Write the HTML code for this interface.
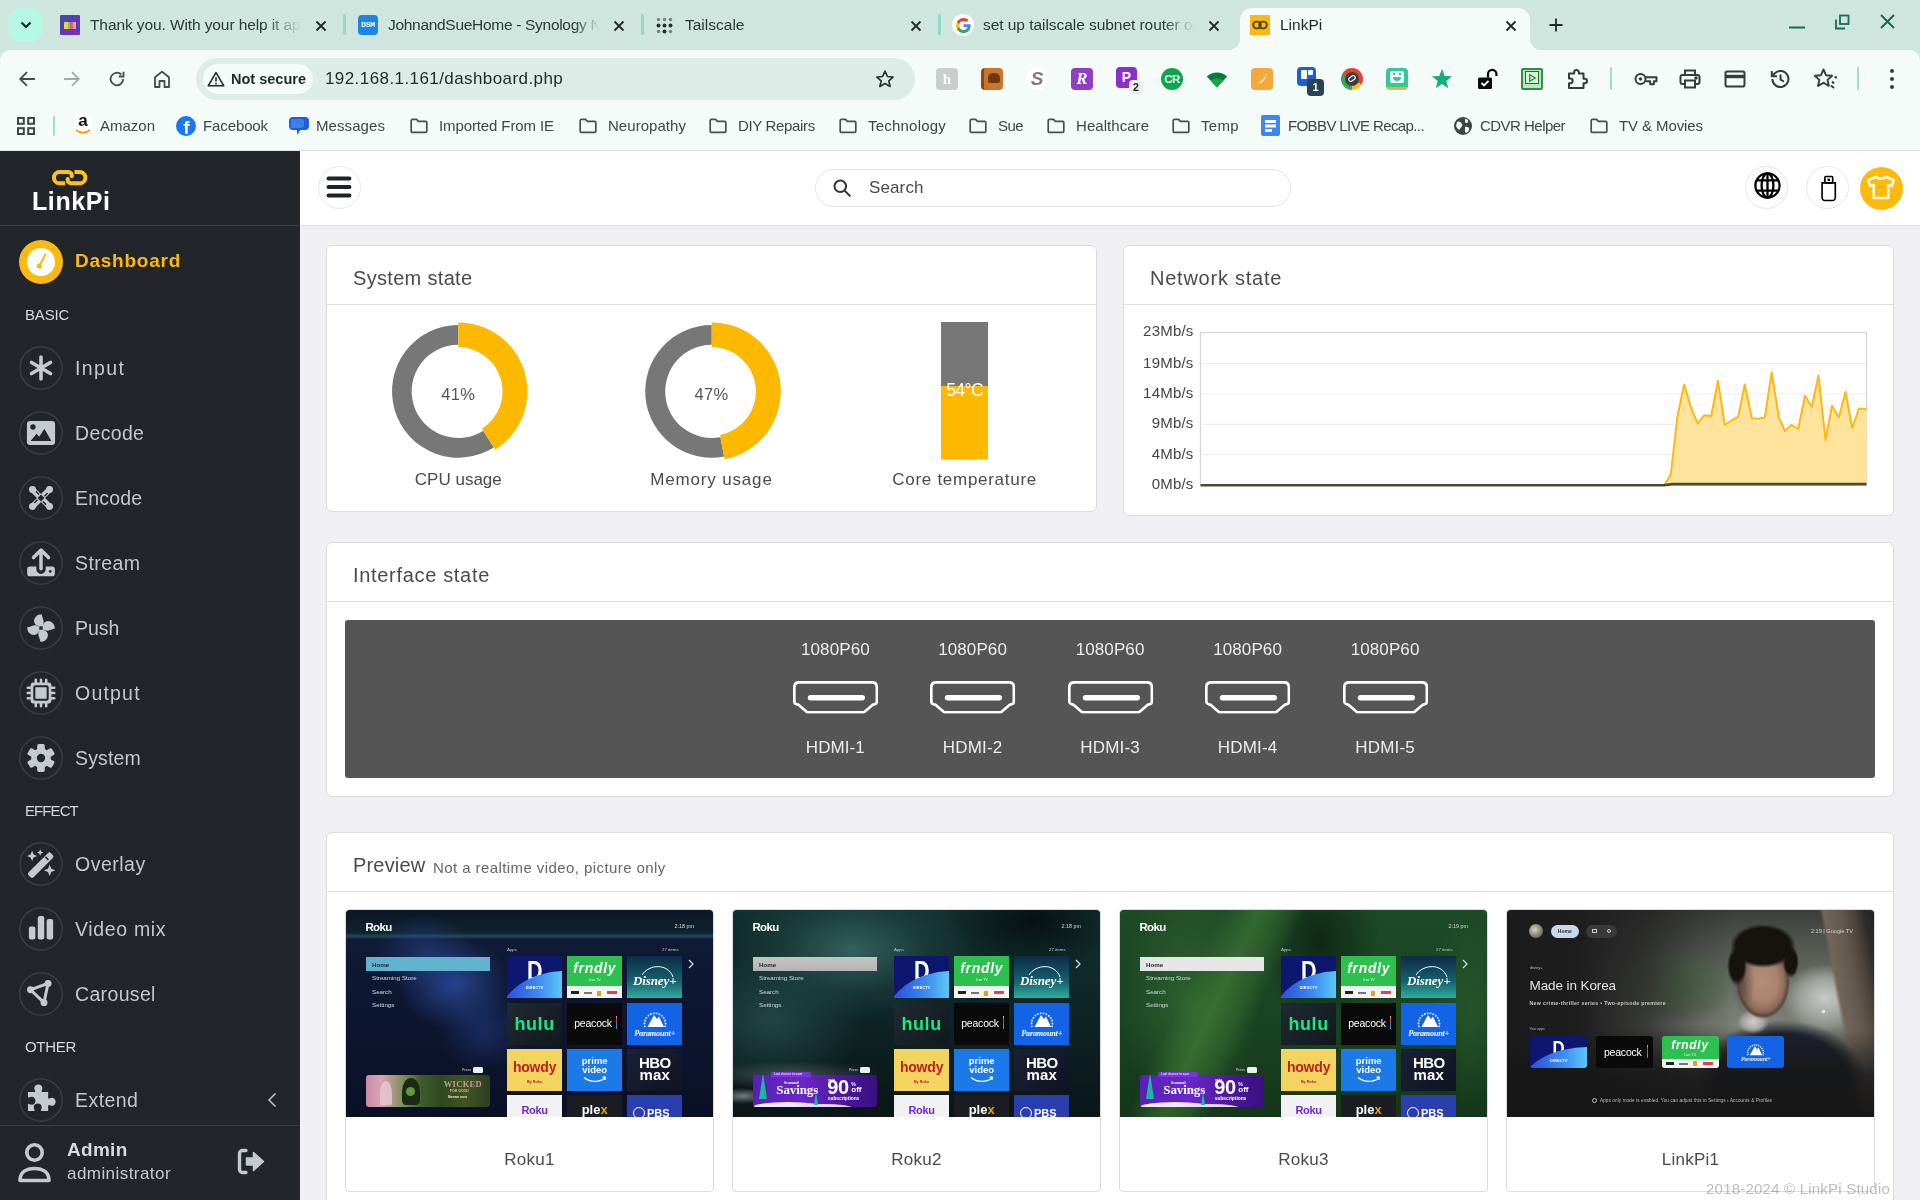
<!DOCTYPE html>
<html lang="en">
<head>
<meta charset="utf-8">
<title>LinkPi</title>
<style>
*{box-sizing:border-box;margin:0;padding:0}
html,body{width:1920px;height:1200px;overflow:hidden;background:#efeff4;will-change:transform;font-family:"Liberation Sans",sans-serif;color:#444}
.abs{position:absolute}
svg{display:block;overflow:visible}
/* ---------- browser chrome ---------- */
#chrome{position:absolute;left:0;top:0;width:1920px;height:151px;background:#f4fbf8;overflow:hidden;border-bottom:1px solid #dfe6e3}
#tabstrip{position:absolute;left:0;top:0;width:1920px;height:64px;background:#cee6de}
#chrome .ttxt{position:absolute;top:15px;font-size:15.5px;color:#2a3a36;white-space:nowrap;overflow:hidden;height:20px;line-height:20px}
#chrome .tx{position:absolute;top:18.5px;width:14px;height:14px}
#chrome .tsep{position:absolute;top:14px;width:3px;height:21px;background:#92d9c5;border-radius:1.5px}
#acttab{position:absolute;left:1240px;top:8px;width:290px;height:42px;background:#f4fbf8;border-radius:12px 12px 0 0}
#acttab:before,#acttab:after{content:"";position:absolute;bottom:0;width:12px;height:12px;background:radial-gradient(circle at 0 0,rgba(244,251,248,0) 12px,#f4fbf8 12.5px)}
#acttab:before{left:-12px}
#acttab:after{right:-12px;background:radial-gradient(circle at 100% 0,rgba(244,251,248,0) 12px,#f4fbf8 12.5px)}
#toolbar{position:absolute;left:0;top:50px;width:1920px;height:101px;background:#f4fbf8;border-radius:10px 10px 0 0}
#omni{position:absolute;left:196px;top:58px;width:719px;height:42px;border-radius:21px;background:#dcede7}
#chip{position:absolute;left:203px;top:64px;width:110px;height:30px;border-radius:15px;background:#f4fbf8}
.bm{position:absolute;top:116px;font-size:15px;color:#3c4743;white-space:nowrap;line-height:20px;height:20px}
.ext{position:absolute;top:68px;width:22px;height:22px;border-radius:4px}
/* ---------- sidebar ---------- */
#side{position:absolute;left:0;top:151px;width:300px;height:1049px;background:#22252a}
#side .sep{position:absolute;left:0;width:300px;height:1px;background:#3b3e44}
.mi{position:absolute;left:19px;width:44px;height:44px;border-radius:50%;box-shadow:inset 0 0 0 1.6px #393d44}
.mi svg{position:absolute;left:7px;top:7px;width:30px;height:30px}
.ml{position:absolute;left:75px;font-size:19.5px;line-height:24px;color:#c3c8cf;letter-spacing:.9px;white-space:nowrap}
.mh{position:absolute;left:25px;font-size:15px;line-height:18px;color:#d5d8dc;letter-spacing:.5px}
/* ---------- top bar ---------- */
#top{position:absolute;left:300px;top:151px;width:1620px;height:75px;background:#fff;border-bottom:1px solid #e3e3e8}
.cbtn{position:absolute;width:43px;height:43px;border-radius:50%;border:1px solid #e6e6e6;background:#fff}
#search{position:absolute;left:515px;top:18px;width:476px;height:38px;border:1px solid #e3e3e3;border-radius:19px}
/* ---------- cards ---------- */
.card{position:absolute;background:#fff;border:1px solid #dcdce0;border-radius:6px}
.card .hd{position:absolute;left:0;top:0;right:0;height:59px;border-bottom:1px solid #dcdce0}
.card .hd span.t{position:absolute;left:26px;top:20px;font-size:20px;line-height:24px;color:#4a4a4a;white-space:nowrap;letter-spacing:.35px}
.lbl{position:absolute;font-size:18px;line-height:22px;color:#4a4a4a;white-space:nowrap;text-align:center;letter-spacing:.3px}

.pc{position:absolute;width:369px;height:283px;border:1px solid #dcdce0;border-radius:4px;background:#fff;overflow:hidden}
.scr{position:absolute;left:0;top:0;width:367px;height:207px;overflow:hidden;background-color:#111;border-radius:3px 3px 0 0}
.pn{position:absolute;left:0;top:239px;width:367px;text-align:center;font-size:17px;line-height:22px;color:#4a4a4a;letter-spacing:.25px}
.tl{position:absolute;overflow:hidden}
.tt{position:absolute;white-space:nowrap;display:block}
i.abs{display:block}
i.sw{display:block;position:absolute;left:-14%;top:36%;width:240%;height:230%;border-radius:50%;background:linear-gradient(90deg,#4a3ed0 0%,#2f63e0 14%,#3b8cf0 30%,#5cc6f6 47%)}
</style>
</head>
<body>
<!-- BROWSER CHROME -->
<div id="chrome">
<div id="tabstrip"></div>
<div id="toolbar"></div>
<div id="acttab"></div>
<svg width="0" height="0" style="position:absolute">
<defs>
<symbol id="fold" viewBox="0 0 20 20"><path d="M2.2 4.6c0-.7.5-1.2 1.2-1.2h4.2l1.8 1.9h7.2c.7 0 1.2.5 1.2 1.2v8.7c0 .7-.5 1.2-1.2 1.2H3.4c-.700 0-1.2-.500-1.2-1.2z" fill="none" stroke="#474f4c" stroke-width="1.7" stroke-linejoin="round"/></symbol>
<symbol id="xx" viewBox="0 0 14 14"><path d="M2.5 2.5l9 9M11.5 2.5l-9 9" stroke="#1f2925" stroke-width="1.8" fill="none"/></symbol>
</defs>
</svg>
<!-- tab search button -->
<div class="abs" style="left:9px;top:8px;width:33px;height:34px;border-radius:11px;background:#b4f8e6"></div>
<svg class="abs" style="left:18px;top:19px" width="16" height="12" viewBox="0 0 16 12"><path d="M3.5 3.5l4.5 4.5 4.5-4.5" stroke="#10201b" stroke-width="2" fill="none"/></svg>
<!-- tab 1 -->
<div class="abs" style="left:60px;top:15px;width:20px;height:20px;background:linear-gradient(135deg,#3a4aa8,#7b2fb5);border-radius:1px"></div>
<div class="abs" style="left:64px;top:21.5px;width:12px;height:7px;background:linear-gradient(90deg,#f2d24a 0 30%,#7cc86a 30% 52%,#e8605a 52% 76%,#c9a0e8 76%)"></div>
<div class="ttxt" style="left:90px;width:212px;-webkit-mask-image:linear-gradient(90deg,#000 82%,transparent);letter-spacing:-.1px">Thank you. With your help it appears</div>
<svg class="tx" style="left:314px"><use href="#xx"/></svg>
<div class="tsep" style="left:343px"></div>
<!-- tab 2 -->
<div class="abs" style="left:358px;top:15px;width:20px;height:20px;background:#1b86e8;border-radius:4px"></div>
<div class="abs" style="left:358px;top:20px;width:20px;height:10px;font:bold 8px/10px 'Liberation Mono',monospace;color:#fff;text-align:center;letter-spacing:-.3px">DSM</div>
<div class="ttxt" style="left:388px;width:212px;-webkit-mask-image:linear-gradient(90deg,#000 88%,transparent);letter-spacing:-.3px">JohnandSueHome - Synology NAS</div>
<svg class="tx" style="left:612px"><use href="#xx"/></svg>
<div class="tsep" style="left:641px"></div>
<!-- tab 3 -->
<svg class="abs" style="left:656px;top:17px" width="17" height="17" viewBox="0 0 17 17" fill="#25302c"><circle cx="2.5" cy="2.5" r="1.7" opacity=".55"/><circle cx="8.5" cy="2.5" r="1.7" opacity=".55"/><circle cx="14.5" cy="2.5" r="1.7" opacity=".55"/><circle cx="2.5" cy="8.5" r="2"/><circle cx="8.5" cy="8.5" r="2"/><circle cx="14.5" cy="8.5" r="2"/><circle cx="2.5" cy="14.5" r="1.7" opacity=".55"/><circle cx="8.5" cy="14.5" r="2"/><circle cx="14.5" cy="14.5" r="1.7" opacity=".55"/></svg>
<div class="ttxt" style="left:685px;width:200px">Tailscale</div>
<svg class="tx" style="left:909px"><use href="#xx"/></svg>
<div class="tsep" style="left:938px"></div>
<!-- tab 4 -->
<div class="abs" style="left:952px;top:14px;width:22px;height:22px;border-radius:50%;background:#fff"></div><svg class="abs" style="left:955.5px;top:17.5px" width="15" height="15" viewBox="0 0 18 18"><path d="M17.6 9.2c0-.600-.100-1.2-.200-1.8H9v3.5h4.8c-.200 1.1-.800 2-1.8 2.7v2.2h2.9c1.7-1.6 2.7-3.9 2.7-6.6z" fill="#4285f4"/><path d="M9 18c2.4 0 4.5-.800 5.9-2.2L12 13.6c-.800.5-1.8.9-3 .9-2.3 0-4.3-1.6-5-3.7H1v2.3C2.5 16 5.5 18 9 18z" fill="#34a853"/><path d="M4 10.8c-.200-.500-.300-1.1-.300-1.8s.100-1.2.3-1.8V4.9H1C.4 6.2 0 7.5 0 9s.400 2.8 1 4.1z" fill="#fbbc05"/><path d="M9 3.6c1.3 0 2.5.4 3.4 1.3L15 2.3C13.5.9 11.4 0 9 0 5.5 0 2.5 2 1 4.9l3 2.3c.7-2.1 2.7-3.6 5-3.6z" fill="#ea4335"/></svg>
<div class="ttxt" style="left:983px;width:212px;-webkit-mask-image:linear-gradient(90deg,#000 85%,transparent);letter-spacing:-.05px">set up tailscale subnet router on</div>
<svg class="tx" style="left:1207px"><use href="#xx"/></svg>
<!-- active tab -->
<div class="abs" style="left:1250px;top:15px;width:20px;height:20px;background:#fdb913"></div>
<svg class="abs" style="left:1252px;top:20px" width="16" height="10" viewBox="0 0 16 10"><rect x="1.2" y="1.7" width="7.6" height="6.6" rx="3.3" fill="none" stroke="#4d4214" stroke-width="1.8"/><rect x="7.2" y="1.7" width="7.6" height="6.6" rx="3.3" fill="none" stroke="#4d4214" stroke-width="1.8"/></svg>
<div class="ttxt" style="left:1280px;width:200px;color:#1c2522">LinkPi</div>
<svg class="tx" style="left:1504px"><use href="#xx"/></svg>
<svg class="abs" style="left:1548px;top:17px" width="16" height="16" viewBox="0 0 16 16"><path d="M8 1.5v13M1.5 8h13" stroke="#1c2925" stroke-width="1.8" fill="none"/></svg>
<!-- window controls -->
<svg class="abs" style="left:1789px;top:26px" width="16" height="3" viewBox="0 0 16 3"><path d="M0 1.5h16" stroke="#156b52" stroke-width="2"/></svg>
<svg class="abs" style="left:1834px;top:14px" width="16" height="16" viewBox="0 0 16 16" fill="none" stroke="#156b52" stroke-width="1.8"><rect x="6" y="1.5" width="8.5" height="8.5"/><path d="M2 5.5v9h9"/></svg>
<svg class="abs" style="left:1880px;top:14px" width="15" height="15" viewBox="0 0 15 15"><path d="M1 1l13 13M14 1L1 14" stroke="#156b52" stroke-width="2" fill="none"/></svg>
<!-- nav buttons -->
<svg class="abs" style="left:18px;top:70px" width="18" height="18" viewBox="0 0 18 18" fill="none" stroke="#434c48" stroke-width="1.8"><path d="M17 9H2.5M9 2.2L2.2 9 9 15.8"/></svg>
<svg class="abs" style="left:63px;top:70px" width="18" height="18" viewBox="0 0 18 18" fill="none" stroke="#a3aca9" stroke-width="1.8"><path d="M1 9h14.5M9 2.2L15.8 9 9 15.8"/></svg>
<svg class="abs" style="left:108px;top:70px" width="18" height="18" viewBox="0 0 18 18" fill="none" stroke="#434c48" stroke-width="1.8"><path d="M15.2 9a6.3 6.3 0 1 1-1.9-4.5"/><path d="M15.5 1.8v4.7h-4.7" stroke-linejoin="miter"/></svg>
<svg class="abs" style="left:153px;top:69px" width="18" height="20" viewBox="0 0 18 20" fill="none" stroke="#434c48" stroke-width="1.8"><path d="M2 18V8.2L9 2.6l7 5.6V18h-4.5v-6h-5v6z" stroke-linejoin="round"/></svg>
<!-- omnibox -->
<div id="omni"></div><div id="chip"></div>
<svg class="abs" style="left:207px;top:71px" width="18" height="16" viewBox="0 0 18 16" fill="none" stroke="#1f2926" stroke-width="1.6"><path d="M9 1.6L16.8 14.8H1.2z" stroke-linejoin="round"/><path d="M9 6.2v4.3M9 11.8v1.6"/></svg>
<div class="abs" style="left:231px;top:69px;font-size:14.5px;font-weight:bold;line-height:20px;color:#1f2926;white-space:nowrap">Not secure</div>
<div class="abs" style="left:325px;top:68px;font-size:17px;line-height:22px;color:#1f2926;white-space:nowrap;letter-spacing:.42px">192.168.1.161/dashboard.php</div>
<svg class="abs" style="left:875px;top:69px" width="20" height="20" viewBox="0 0 20 20" fill="none" stroke="#2a3632" stroke-width="1.7"><path d="M10 2.2l2.4 5.3 5.7.6-4.3 3.8 1.3 5.6L10 14.6l-5.1 2.9 1.3-5.6L1.9 8.1l5.7-.600z" stroke-linejoin="round"/></svg>
<!-- extension icons -->
<div class="ext" style="left:936px;background:#c9cdcb"></div><div class="abs" style="left:936px;top:68px;width:22px;height:22px;font:bold 15px/22px 'Liberation Serif',serif;color:#fff;text-align:center">ħ</div>
<div class="ext" style="left:981px;background:#c9762a;border-left:3px solid #8a4a14"></div><div class="abs" style="left:988px;top:73px;width:12px;height:10px;background:#6b3a10;border-radius:5px 5px 2px 2px"></div>
<div class="ext" style="left:1026px;background:#fff;border-radius:11px"></div><div class="abs" style="left:1026px;top:68px;width:22px;height:22px;font:italic bold 19px/22px 'Liberation Sans',sans-serif;color:#7d7d7d;text-align:center">S</div>
<div class="ext" style="left:1071px;background:#8e3fc4"></div><div class="abs" style="left:1071px;top:68px;width:22px;height:22px;font:italic bold 17px/22px 'Liberation Serif',serif;color:#fff;text-align:center">R</div>
<div class="ext" style="left:1116px;background:#8b2fc9;width:21px;height:21px;top:67px"></div><div class="abs" style="left:1116px;top:67px;width:21px;height:21px;font:bold 14px/21px 'Liberation Sans',sans-serif;color:#fff;text-align:center">P</div>
<div class="abs" style="left:1129px;top:80px;width:14px;height:14px;border-radius:4px;background:#e9efec;font:bold 10.5px/14px 'Liberation Sans',sans-serif;color:#222;text-align:center">2</div>
<div class="ext" style="left:1161px;background:#0aa54f;border-radius:11px"></div><div class="abs" style="left:1161px;top:68px;width:22px;height:22px;font:bold 11.5px/22px 'Liberation Sans',sans-serif;color:#fff;text-align:center;letter-spacing:-.5px">CR</div>
<svg class="abs" style="left:1206px;top:71px" width="22" height="17" viewBox="0 0 22 17"><path d="M11 16.5L.800 5.5C6.5.3 15.5.3 21.2 5.5z" fill="#0b7a3a"/><path d="M11 16.5L4.8 9.8c3.6-3.2 8.8-3.2 12.4 0z" fill="#19a34f"/></svg>
<div class="ext" style="left:1251px;background:#f6a83a"></div><svg class="abs" style="left:1254px;top:71px" width="16" height="16" viewBox="0 0 16 16"><path d="M2 14C6 12 10 8 13 2c-1 6-5 10-9 11z" fill="#fff"/></svg>
<div class="abs" style="left:1297px;top:67px;width:19px;height:19px;border-radius:4px;background:#1d5fd0"></div><div class="abs" style="left:1301px;top:70px;width:6px;height:9px;background:#fff;border-radius:1px"></div><div class="abs" style="left:1308px;top:70px;width:5px;height:5px;background:#fff;border-radius:1px"></div>
<div class="abs" style="left:1307px;top:79px;width:17px;height:17px;border-radius:4px;background:#2a4354;font:bold 11px/17px 'Liberation Sans',sans-serif;color:#fff;text-align:center">1</div>
<div class="abs" style="left:1341px;top:68px;width:22px;height:22px;border-radius:50%;background:conic-gradient(#e74234 0 33%,#f7bd1a 33% 50%,#3aa757 50% 83%,#e74234 83%)"></div><div class="abs" style="left:1345px;top:72px;width:14px;height:14px;border-radius:50%;background:#3b3f42"></div><div class="abs" style="left:1348px;top:76px;width:8px;height:5px;border:1.5px solid #fff;border-radius:3px;transform:rotate(-35deg)"></div>
<div class="ext" style="left:1386px;background:#2fc99a;border-bottom:3px solid #e8b23a"></div><div class="abs" style="left:1390px;top:71px;width:14px;height:12px;background:#f2fbf7;border-radius:2px"></div><div class="abs" style="left:1393px;top:77px;width:8px;height:4px;background:#2fc99a;border-radius:0 0 4px 4px"></div><div class="abs" style="left:1393px;top:73px;width:2px;height:2px;background:#2fc99a"></div><div class="abs" style="left:1399px;top:73px;width:2px;height:2px;background:#2fc99a"></div>
<svg class="abs" style="left:1431px;top:68px" width="22" height="21" viewBox="0 0 22 21"><path d="M11 .800l2.7 7.1 7.5.3-5.9 4.7 2 7.3L11 16l-6.3 4.2 2-7.3L.800 8.2l7.5-.300z" fill="#12b17a"/></svg>
<svg class="abs" style="left:1477px;top:67px" width="22" height="24" viewBox="0 0 22 24"><rect x="1" y="10.5" width="14" height="11.5" rx="1.5" fill="#0a0a0a"/><path d="M11 10.5V7a4.2 4.2 0 0 1 8.4 0v2" fill="none" stroke="#0a0a0a" stroke-width="2.2"/><path d="M4.5 16l2.5 2.5 4.5-4.5" stroke="#fff" stroke-width="1.8" fill="none"/></svg>
<div class="abs" style="left:1521px;top:68px;width:22px;height:22px;border:2px solid #2f8f46;background:#b9e7bf;border-radius:2px"></div><div class="abs" style="left:1525px;top:71px;width:14px;height:13px;border:1.5px solid #1f6a33;background:#d8f3da"></div><svg class="abs" style="left:1529px;top:74px" width="7" height="8" viewBox="0 0 7 8"><path d="M.800.8l5.5 3.2L.800 7.2z" fill="none" stroke="#1f8a3b" stroke-width="1.3"/></svg>
<svg class="abs" style="left:1566px;top:67px" width="22" height="23" viewBox="0 0 22 23" fill="none" stroke="#333d39" stroke-width="2"><path d="M3 6.5h5.2V5.3a2.3 2.3 0 0 1 4.6 0v1.2H17.5v5.2h1.2a2.3 2.3 0 0 1 0 4.6h-1.2V21H3v-4.8h1.3a2.3 2.3 0 0 0 0-4.6H3z" stroke-linejoin="round"/></svg>
<div class="abs" style="left:1610px;top:67px;width:2px;height:23px;background:#9be2cc;border-radius:1px"></div>
<svg class="abs" style="left:1634px;top:70px" width="24" height="18" viewBox="0 0 24 18" fill="none" stroke="#333d39" stroke-width="2"><circle cx="6.5" cy="9" r="5"/><circle cx="6.5" cy="9" r="1.3" fill="#333d39" stroke-width="1"/><path d="M11.5 7.2H22.5v4h-2.6v3h-3.7v-3h-4.7" stroke-linejoin="round"/></svg>
<svg class="abs" style="left:1679px;top:68px" width="22" height="22" viewBox="0 0 22 22" fill="none" stroke="#333d39" stroke-width="2"><path d="M6 7V2.5h10V7"/><rect x="1.5" y="7" width="19" height="9" rx="2"/><rect x="6" y="12.5" width="10" height="7" fill="#f4fbf8"/><circle cx="17" cy="10" r=".800" fill="#333d39"/></svg>
<svg class="abs" style="left:1724px;top:70px" width="22" height="18" viewBox="0 0 22 18" fill="none" stroke="#333d39" stroke-width="2"><rect x="1.5" y="1.5" width="19" height="15" rx="1.8"/><path d="M1.5 6.5h19" stroke-width="3.4"/></svg>
<svg class="abs" style="left:1769px;top:68px" width="22" height="22" viewBox="0 0 22 22" fill="none" stroke="#333d39" stroke-width="2"><path d="M3.4 11a8 8 0 1 0 2.4-5.7L3 8"/><path d="M2.8 3v5.2h5.2" /><path d="M11.5 6.5v5l3.4 2.2"/></svg>
<svg class="abs" style="left:1813px;top:67px" width="26" height="24" viewBox="0 0 26 24" fill="none" stroke="#333d39" stroke-width="1.9" stroke-linejoin="round"><path d="M10.5 2.5l2.5 5.7 6.1.6-4.6 4.1 1.4 6L10.5 15.8 5 18.9l1.4-6L1.8 8.8l6.2-.600z"/><path d="M19 14.5l2 2M18 18.5l3 2.5M21.5 10l2.5.5"/></svg>
<div class="abs" style="left:1857px;top:67px;width:2px;height:23px;background:#9be2cc;border-radius:1px"></div>
<svg class="abs" style="left:1889px;top:68px" width="6" height="22" viewBox="0 0 6 22" fill="#333d39"><circle cx="3" cy="3" r="2"/><circle cx="3" cy="11" r="2"/><circle cx="3" cy="19" r="2"/></svg>
<!-- bookmarks bar -->
<svg class="abs" style="left:17px;top:117px" width="18" height="18" viewBox="0 0 18 18" fill="none" stroke="#3d4643" stroke-width="2"><rect x="1" y="1" width="5.8" height="5.8"/><rect x="11.2" y="1" width="5.8" height="5.8"/><rect x="1" y="11.2" width="5.8" height="5.8"/><rect x="11.2" y="11.2" width="5.8" height="5.8"/></svg>
<div class="abs" style="left:53px;top:116px;width:2px;height:20px;background:#9be2cc;border-radius:1px"></div>
<div class="abs" style="left:74px;top:115px;width:18px;height:18px;background:#fff;border-radius:4px"></div><div class="abs" style="left:74px;top:111px;width:18px;height:20px;font:bold 17px/20px 'Liberation Sans',sans-serif;color:#111;text-align:center">a</div><svg class="abs" style="left:75px;top:129px" width="16" height="5" viewBox="0 0 16 5"><path d="M1 1c4.5 3.5 9.5 3.5 14 0" stroke="#f90" stroke-width="1.8" fill="none"/></svg>
<div class="bm" style="left:100px;letter-spacing:-0.01px">Amazon</div>
<div class="abs" style="left:176px;top:116px;width:20px;height:20px;border-radius:50%;background:#1877f2"></div><div class="abs" style="left:176px;top:117px;width:21px;height:20px;font:bold 19px/21px 'Liberation Sans',sans-serif;color:#fff;text-align:center">f</div>
<div class="bm" style="left:203px;letter-spacing:-0.11px">Facebook</div>
<svg class="abs" style="left:288px;top:115px" width="22" height="22" viewBox="0 0 22 22"><path d="M5 2h12a4 4 0 0 1 4 4v5a4 4 0 0 1-4 4h-4.5L9 20v-5H5a4 4 0 0 1-4-4V6a4 4 0 0 1 4-4z" fill="#1a5fe0"/><path d="M3 4h10a3 3 0 0 1 3 3v3a3 3 0 0 1-3 3H3z" fill="#6ea0ff" opacity=".45"/></svg>
<div class="bm" style="left:316px;letter-spacing:0.08px">Messages</div>
<svg class="abs" style="left:409px;top:116px" width="20" height="20"><use href="#fold"/></svg><div class="bm" style="left:439px;letter-spacing:-0.11px">Imported From IE</div>
<svg class="abs" style="left:578px;top:116px" width="20" height="20"><use href="#fold"/></svg><div class="bm" style="left:608px;letter-spacing:0.04px">Neuropathy</div>
<svg class="abs" style="left:708px;top:116px" width="20" height="20"><use href="#fold"/></svg><div class="bm" style="left:738px;letter-spacing:-0.33px">DIY Repairs</div>
<svg class="abs" style="left:838px;top:116px" width="20" height="20"><use href="#fold"/></svg><div class="bm" style="left:868px;letter-spacing:0.21px">Technology</div>
<svg class="abs" style="left:968px;top:116px" width="20" height="20"><use href="#fold"/></svg><div class="bm" style="left:998px;letter-spacing:-0.57px">Sue</div>
<svg class="abs" style="left:1046px;top:116px" width="20" height="20"><use href="#fold"/></svg><div class="bm" style="left:1076px;letter-spacing:0.05px">Healthcare</div>
<svg class="abs" style="left:1171px;top:116px" width="20" height="20"><use href="#fold"/></svg><div class="bm" style="left:1201px;letter-spacing:0.33px">Temp</div>
<div class="abs" style="left:1261px;top:115px;width:19px;height:21px;border-radius:2px;background:#3f86f5"></div><div class="abs" style="left:1265px;top:120px;width:11px;height:2.5px;background:#fff;box-shadow:0 4.5px 0 #fff"></div><div class="abs" style="left:1265px;top:129px;width:7px;height:2.5px;background:#fff"></div>
<div class="bm" style="left:1288px;letter-spacing:-0.61px">FOBBV LIVE Recap...</div>
<svg class="abs" style="left:1453px;top:116px" width="20" height="20" viewBox="0 0 20 20"><circle cx="10" cy="10" r="9" fill="#3d4643"/><path d="M4 6c2-1 4 0 5 2s-1 3-2 5-3-1-4-3zM12 3c2 0 4 1 3 3s-3 1-3-1zM12 11c2-1 5 0 4 3s-4 4-4 1z" fill="#f4fbf8"/></svg>
<div class="bm" style="left:1480px;letter-spacing:-0.53px">CDVR Helper</div>
<svg class="abs" style="left:1589px;top:116px" width="20" height="20"><use href="#fold"/></svg><div class="bm" style="left:1619px;letter-spacing:-0.09px">TV &amp; Movies</div>

</div>

<!-- SIDEBAR -->
<div id="side">
<!-- logo -->
<svg class="abs" style="left:51.6px;top:19.4px" width="35.3" height="15.3" viewBox="0 0 35.3 15.3" fill="none" stroke="#fdc31c" stroke-width="4"><path d="M13.1 13.3H7.6A5.65 5.65 0 0 1 7.6 2H16Q20 2 19.8 6.2" stroke-linecap="butt"/><path d="M22.5 2H27.7A5.65 5.65 0 0 1 27.7 13.3H19.5Q15.5 13.3 15.7 9.1"/><circle cx="19.8" cy="6.3" r="2" fill="#fdc31c" stroke="none"/><circle cx="15.7" cy="9" r="2" fill="#fdc31c" stroke="none"/></svg>
<div class="abs" style="left:32px;top:35px;font-size:25px;font-weight:bold;line-height:30px;color:#fff;white-space:nowrap;letter-spacing:.6px">LinkPi</div>
<div class="sep" style="top:74px"></div>
<!-- dashboard -->
<div class="abs" style="left:18.5px;top:89px;width:44px;height:44px;border-radius:50%;background:#fdb913"></div>
<div class="abs" style="left:26.5px;top:97px;width:28px;height:28px;border-radius:50%;background:#fff"></div>
<svg class="abs" style="left:26px;top:97px" width="29" height="29" viewBox="0 0 29 29"><path d="M19.5 6.5l-6 11" stroke="#fdb913" stroke-width="2" stroke-linecap="round"/><circle cx="13.2" cy="18" r="2.6" fill="#fdb913"/></svg>
<div class="abs" style="left:75px;top:98px;font-size:19px;font-weight:bold;line-height:24px;color:#fdb913;white-space:nowrap;letter-spacing:0.75px">Dashboard</div>
<div class="mh" style="top:155px;letter-spacing:-0.14px">BASIC</div>
<!-- Input -->
<div class="mi" style="top:195px"><svg viewBox="0 0 26 26" fill="none" stroke="#c5cad1" stroke-width="3.1" stroke-linecap="round"><path d="M13 3.5v19M4.8 8.2l16.4 9.6M21.2 8.2L4.8 17.8"/></svg></div>
<div class="ml" style="top:205px;letter-spacing:1.41px">Input</div>
<!-- Decode -->
<div class="mi" style="top:260px"><svg viewBox="0 0 26 26"><path d="M.8 5.4A2.8 2.8 0 0 1 3.6 2.6h18.8a2.8 2.8 0 0 1 2.8 2.8v15.2a2.8 2.8 0 0 1-2.8 2.8H3.6a2.8 2.8 0 0 1-2.8-2.8z" fill="#c5cad1"/><circle cx="6" cy="7.8" r="2.3" fill="#22252a"/><path d="M4 20l5.2-6.3 2.3 2.6 4.4-7 6.1 10.7z" fill="#22252a"/></svg></div>
<div class="ml" style="top:270px;letter-spacing:0.35px">Decode</div>
<!-- Encode -->
<div class="mi" style="top:325px"><svg viewBox="0 0 26 26"><g stroke="#c5cad1" stroke-width="5" stroke-linecap="round"><path d="M6 6L20 20M20 6L6 20"/></g><g stroke="#22252a" stroke-width="1.2" fill="none"><path d="M8.6 7.2L11.4 10M14.6 16L17.4 18.8M18.8 8.6L16 11.4M10 14.6L7.2 17.4"/></g><rect x="10.9" y="10.9" width="4.2" height="4.2" transform="rotate(45 13 13)" fill="#22252a"/><g fill="#c5cad1"><circle cx="5.6" cy="5.6" r="3"/><circle cx="20.4" cy="5.6" r="3"/><circle cx="5.6" cy="20.4" r="3"/><circle cx="20.4" cy="20.4" r="3"/></g></svg></div>
<div class="ml" style="top:335px;letter-spacing:0.18px">Encode</div>
<!-- Stream -->
<div class="mi" style="top:390px"><svg viewBox="0 0 26 26"><path d="M13 18V2.2M6.5 8.3l6.5-6.5 6.5 6.5" fill="none" stroke="#c5cad1" stroke-width="3" stroke-linecap="round" stroke-linejoin="round"/><path d="M1 18.5A2.5 2.5 0 0 1 3.5 16H9v2.5a4 4 0 0 0 8 0V16h5.5a2.5 2.5 0 0 1 2.5 2.5v3.5A2.5 2.5 0 0 1 22.5 24.5h-19A2.5 2.5 0 0 1 1 22z" fill="#c5cad1"/><circle cx="21" cy="20.3" r="1.2" fill="#22252a"/></svg></div>
<div class="ml" style="top:400px;letter-spacing:0.44px">Stream</div>
<!-- Push -->
<div class="mi" style="top:455px"><svg viewBox="0 0 26 26" fill="#c5cad1"><path d="M13.5 1c-4 0-6.5 3-6.5 6 0 2.5 2 4 4.5 4.5L13.5 13l1.5-3c.5-1.5.5-3.5-.5-5.5z"/><path d="M25 13.5c0-4-3-6.5-6-6.5-2.5 0-4 2-4.5 4.5L13 13.5l3 1.5c1.5.5 3.5.5 5.5-.5z"/><path d="M12.5 25c4 0 6.5-3 6.5-6 0-2.5-2-4-4.5-4.5L12.5 13 11 16c-.5 1.5-.5 3.5.5 5.5z"/><path d="M1 12.5c0 4 3 6.5 6 6.5 2.5 0 4-2 4.5-4.5L13 12.5l-3-1.5c-1.5-.5-3.5-.5-5.5.5z"/><circle cx="13" cy="13" r="1.6" fill="#22252a"/></svg></div>
<div class="ml" style="top:465px;letter-spacing:-0.06px">Push</div>
<!-- Output -->
<div class="mi" style="top:520px"><svg viewBox="0 0 26 26"><g stroke="#c5cad1" stroke-width="2.2" stroke-linecap="round"><path d="M8.5 1.5v23M13 1.5v23M17.5 1.5v23M1.5 8.5h23M1.5 13h23M1.5 17.5h23"/></g><rect x="4" y="4" width="18" height="18" rx="2.5" fill="#c5cad1"/><rect x="7.2" y="7.2" width="11.6" height="11.6" rx="1" fill="none" stroke="#22252a" stroke-width="1.8"/></svg></div>
<div class="ml" style="top:530px;letter-spacing:1.21px">Output</div>
<!-- System -->
<div class="mi" style="top:585px"><svg viewBox="0 0 26 26"><g fill="#c5cad1"><circle cx="13" cy="13" r="8.5"/><g id="teeth"><rect x="9.7" y="0.8" width="6.6" height="24.4" rx="1.5"/><rect x="9.7" y="0.8" width="6.6" height="24.4" rx="1.5" transform="rotate(60 13 13)"/><rect x="9.7" y="0.8" width="6.6" height="24.4" rx="1.5" transform="rotate(120 13 13)"/></g></g><circle cx="13" cy="13" r="3.6" fill="#22252a"/></svg></div>
<div class="ml" style="top:595px;letter-spacing:0.13px">System</div>
<div class="mh" style="top:651px;letter-spacing:-0.91px">EFFECT</div>
<!-- Overlay -->
<div class="mi" style="top:691px"><svg viewBox="0 0 26 26" fill="#c5cad1"><path d="M2.3 20.2L18.9 3.6a1.9 1.9 0 0 1 2.7 0l1.6 1.6a1.9 1.9 0 0 1 0 2.7L6.6 24.5a1.9 1.9 0 0 1-2.7 0l-1.6-1.6a1.9 1.9 0 0 1 0-2.7z"/><path d="M16.8 6.8l2.6 2.6" stroke="#22252a" stroke-width="1.3"/><path d="M5.3 1.6l1.3 3.1 3.1 1.3-3.1 1.3-1.3 3.1L4 7.3.9 6 4 4.7zM12.3.2l.8 2 2 .8-2 .8-.8 2-.8-2-2-.8 2-.8zM20.5 13.5l1.4 3.6 3.6 1.4-3.6 1.4-1.4 3.6-1.4-3.6-3.6-1.4 3.6-1.4z"/></svg></div>
<div class="ml" style="top:701px;letter-spacing:0.5px">Overlay</div>
<!-- Video mix -->
<div class="mi" style="top:756px"><svg viewBox="0 0 26 26" fill="#c5cad1"><rect x="2.5" y="10.9" width="5.6" height="11.3" rx="1.8"/><rect x="10.2" y="1.7" width="5.6" height="20.5" rx="1.8"/><rect x="17.9" y="4.3" width="5.6" height="17.9" rx="1.8"/></svg></div>
<div class="ml" style="top:766px;letter-spacing:0.67px">Video mix</div>
<!-- Carousel -->
<div class="mi" style="top:821px"><svg viewBox="0 0 26 26"><path d="M3.9 9.3L19.1 3.8l-3.5 16.7z" fill="none" stroke="#c5cad1" stroke-width="2.6" stroke-linejoin="round"/><g fill="#c5cad1"><circle cx="3.9" cy="9.3" r="3"/><circle cx="19.1" cy="3.8" r="3"/><circle cx="15.6" cy="20.5" r="3"/></g></svg></div>
<div class="ml" style="top:831px;letter-spacing:0.34px">Carousel</div>
<div class="mh" style="top:887px;letter-spacing:-0.3px">OTHER</div>
<!-- Extend -->
<div class="mi" style="top:927px"><svg viewBox="0 0 26 26"><path transform="translate(-.3,-2.4)" d="M2 8.5h5.5c.6 0 .9-.5.7-1C7.8 6.7 7.5 6 7.5 5.2 7.5 3.4 9 2 11 2s3.5 1.4 3.5 3.2c0 .8-.3 1.5-.7 2.3-.2.5.1 1 .7 1h5v5c0 .6.5.9 1 .7.8-.4 1.5-.7 2.3-.7 1.8 0 3.2 1.5 3.2 3.5s-1.4 3.5-3.2 3.5c-.8 0-1.5-.3-2.3-.7-.5-.2-1 .1-1 .7V25h-5.5c-.6 0-.9-.5-.7-1 .4-.8.7-1.5.7-2.3 0-1.8-1.5-3.2-3.5-3.2S7 19.9 7 21.7c0 .8.3 1.5.7 2.3.2.5-.1 1-.7 1H2v-5.5c0-.6.5-.9 1-.7.8.4 1.5.7 2.3.7 1.8 0 3.2-1.5 3.2-3.5S7.1 12.5 5.3 12.5c-.8 0-1.5.3-2.3.7-.5.2-1-.1-1-.7z" fill="#c5cad1"/></svg></div>
<div class="ml" style="top:937px;letter-spacing:0.45px">Extend</div>
<svg class="abs" style="left:267px;top:941px" width="10" height="16" viewBox="0 0 10 16"><path d="M8.5 1.5L2 8l6.5 6.5" fill="none" stroke="#b9bec5" stroke-width="1.6"/></svg>
<div class="sep" style="top:974px"></div>
<!-- admin -->
<svg class="abs" style="left:18px;top:991px" width="33" height="41" viewBox="0 0 33 41" fill="none" stroke="#c5cad1" stroke-width="3.6"><circle cx="16.5" cy="10.5" r="7.7"/><path d="M2 38.5c0-8 6-12 14.5-12S31 30.5 31 38.5z" stroke-linejoin="round"/></svg>
<div class="abs" style="left:67px;top:987px;font-size:19px;font-weight:bold;line-height:24px;color:#d6dade;white-space:nowrap;letter-spacing:0.3px">Admin</div>
<div class="abs" style="left:67px;top:1012px;font-size:17px;line-height:22px;color:#c5cad1;white-space:nowrap;letter-spacing:0.44px">administrator</div>
<svg class="abs" style="left:237px;top:997px" width="28" height="27" viewBox="0 0 28 27"><path d="M9 2.5H5.5A3 3 0 0 0 2.5 5.5v16a3 3 0 0 0 3 3H9" fill="none" stroke="#c5cad1" stroke-width="3.4" stroke-linecap="round"/><path d="M16.5 4.5l10 9-10 9v-5.5H9.5v-7h7z" fill="#c5cad1" stroke="#c5cad1" stroke-width="1.5" stroke-linejoin="round"/></svg>

</div>

<!-- TOP BAR -->
<div id="top">
<div class="cbtn" style="left:18px;top:15px"></div>
<svg class="abs" style="left:27px;top:25px" width="24" height="23" viewBox="0 0 24 23"><path d="M1.5 2.5h21M1.5 11h21M1.5 19.5h21" stroke="#1f2226" stroke-width="3.9" stroke-linecap="round"/></svg>
<div id="search"></div>
<svg class="abs" style="left:533px;top:28px" width="18" height="18" viewBox="0 0 18 18" fill="none" stroke="#333" stroke-width="2"><circle cx="7.3" cy="7.3" r="5.8"/><path d="M11.6 11.6l5.2 5.2" stroke-linecap="round"/></svg>
<div class="abs" style="left:569px;top:26px;font-size:17px;line-height:22px;color:#4a4a4a;white-space:nowrap;letter-spacing:0.12px">Search</div>
<!-- globe -->
<div class="cbtn" style="left:1445px;top:15px"></div>
<svg class="abs" style="left:1453.5px;top:20.5px" width="27" height="27" viewBox="0 0 27 27" fill="none" stroke="#000" stroke-width="2.3"><circle cx="13.5" cy="13.5" r="12.1"/><ellipse cx="13.5" cy="13.5" rx="5.9" ry="12.1"/><path d="M13.5 1.5v24M3 8.3h21M3 18.7h21"/></svg>
<!-- usb -->
<div class="cbtn" style="left:1506px;top:15px"></div>
<svg class="abs" style="left:1520.8px;top:24px" width="15.4" height="27" viewBox="0 0 17 29" fill="none" stroke="#000" stroke-width="1.8"><rect x="4.3" y="1.3" width="8.6" height="7" rx="1"/><rect x="7.3" y="3.6" width="2.6" height="2.6" fill="#000" stroke="none"/><path d="M1.2 8.3h14.6v16.5a3 3 0 0 1-3 3H4.2a3 3 0 0 1-3-3z"/></svg>
<!-- tshirt -->
<div class="abs" style="left:1559.5px;top:15.5px;width:43px;height:43px;border-radius:50%;background:#fcb90f"></div>
<svg class="abs" style="left:1566px;top:24px" width="30" height="25" viewBox="0 0 30 25" fill="none" stroke="#fffbd5" stroke-width="2.6" stroke-linejoin="round"><path d="M10.5 1.7c1 2.6 8 2.6 9 0l8.3 3.5-2 5.8-3.6-1v13H7.8V10L4.2 11l-2-5.8z"/></svg>

</div>

<!-- CARDS -->
<div class="card" id="c-sys" style="left:326px;top:245px;width:771px;height:267px">
<div class="hd"><span class="t" style="letter-spacing:0.32px">System state</span></div>
<svg class="abs" style="left:0;top:0" width="769" height="265" viewBox="327 246 769 265"><path d="M493.8 447.4A66.3 66.3 0 1 1 458.3 325.1L458.3 344.8A46.6 46.6 0 1 0 483.3 430.7Z" fill="#777"/><path d="M458.3 322.4A69 69 0 0 1 495.3 449.7L482.0 428.8A44.3 44.3 0 0 0 458.3 347.1Z" fill="#fdb900"/><path d="M724.1 456.5A66.3 66.3 0 1 1 711.7 325.1L711.7 344.8A46.6 46.6 0 1 0 720.4 437.2Z" fill="#777"/><path d="M711.7 322.4A69 69 0 0 1 724.6 459.2L720.0 434.9A44.3 44.3 0 0 0 711.7 347.1Z" fill="#fdb900"/><rect x="941" y="322" width="47" height="64" fill="#777"/><rect x="941" y="386" width="47" height="73.6" fill="#fdb900"/></svg>
<div class="lbl" style="left:91.2px;top:137px;width:80px;font-size:16.5px;line-height:22px;color:#555;letter-spacing:0.29px">41%</div>
<div class="lbl" style="left:344.5px;top:137px;width:80px;font-size:16.5px;line-height:22px;color:#555;letter-spacing:0.29px">47%</div>
<div class="lbl" style="left:597.6px;top:133px;width:80px;font-size:17.5px;line-height:22px;color:#fff;letter-spacing:-0.6px">54°C</div>
<div class="lbl" style="left:31.3px;top:223px;width:200px;font-size:17px;line-height:22px;color:#4a4a4a;letter-spacing:-0.0px">CPU usage</div>
<div class="lbl" style="left:284.5px;top:223px;width:200px;font-size:17px;line-height:22px;color:#4a4a4a;letter-spacing:0.83px">Memory usage</div>
<div class="lbl" style="left:537.6px;top:223px;width:200px;font-size:17px;line-height:22px;color:#4a4a4a;letter-spacing:0.72px">Core temperature</div>

</div>
<div class="card" id="c-net" style="left:1123px;top:245px;width:771px;height:271px">
<div class="hd"><span class="t" style="letter-spacing:0.76px">Network state</span></div>
<svg class="abs" style="left:0;top:0" width="769" height="269" viewBox="1124 246 769 269" font-family="Liberation Sans, sans-serif"><rect x="1200.5" y="332.5" width="666" height="152.5" fill="#fff" stroke="#d6d6d6" stroke-width="1.3"/><path d="M1201 363.5H1866" stroke="#efefef" stroke-width="1.2"/><path d="M1201 393.9H1866" stroke="#efefef" stroke-width="1.2"/><path d="M1201 424.3H1866" stroke="#efefef" stroke-width="1.2"/><path d="M1201 454.7H1866" stroke="#efefef" stroke-width="1.2"/><polygon points="1664.8,484.2 1670.8,474.5 1677.5,416.0 1684.2,384.5 1691.8,410.0 1697.8,423.5 1704.5,415.2 1711.2,416.0 1718.0,380.8 1724.8,425.0 1731.5,420.5 1738.2,416.8 1744.7,384.5 1751.8,418.2 1758.5,418.7 1764.8,417.5 1771.7,372.2 1778.8,417.5 1784.8,431.0 1791.5,425.0 1798.2,428.8 1805.0,395.8 1811.8,407.0 1818.5,375.5 1825.5,440.0 1832.0,405.8 1838.8,417.5 1845.5,392.0 1852.2,428.0 1859.0,408.5 1866.5,409.2 1866.5,485 1664.75,485" fill="#fee39c"/><polyline points="1664.8,484.2 1670.8,474.5 1677.5,416.0 1684.2,384.5 1691.8,410.0 1697.8,423.5 1704.5,415.2 1711.2,416.0 1718.0,380.8 1724.8,425.0 1731.5,420.5 1738.2,416.8 1744.7,384.5 1751.8,418.2 1758.5,418.7 1764.8,417.5 1771.7,372.2 1778.8,417.5 1784.8,431.0 1791.5,425.0 1798.2,428.8 1805.0,395.8 1811.8,407.0 1818.5,375.5 1825.5,440.0 1832.0,405.8 1838.8,417.5 1845.5,392.0 1852.2,428.0 1859.0,408.5 1866.5,409.2" fill="none" stroke="#fdb913" stroke-width="2" stroke-linejoin="round"/><path d="M1200.5 485.2H1664l8-1.1H1866.5" fill="none" stroke="#4f4832" stroke-width="2.6"/><text x="1193.5" y="336.4" font-size="15" fill="#444" text-anchor="end" letter-spacing=".2">23Mb/s</text><text x="1193.5" y="368.1" font-size="15" fill="#444" text-anchor="end" letter-spacing=".2">19Mb/s</text><text x="1193.5" y="398.0" font-size="15" fill="#444" text-anchor="end" letter-spacing=".2">14Mb/s</text><text x="1193.5" y="428.4" font-size="15" fill="#444" text-anchor="end" letter-spacing=".2">9Mb/s</text><text x="1193.5" y="458.7" font-size="15" fill="#444" text-anchor="end" letter-spacing=".2">4Mb/s</text><text x="1193.5" y="488.7" font-size="15" fill="#444" text-anchor="end" letter-spacing=".2">0Mb/s</text></svg>

</div>
<div class="card" id="c-if" style="left:326px;top:542px;width:1568px;height:255px">
<div class="hd"><span class="t" style="letter-spacing:0.68px">Interface state</span></div>
<div class="abs" style="left:18px;top:77px;width:1530px;height:158px;;background:#555;border-radius:3px"></div>
<svg width="0" height="0" style="position:absolute"><defs><symbol id="hdmi" viewBox="0 0 85.2 32.6"><path d="M6.3 1.3H78.9Q83.9 1.3 83.9 6.3V20.2Q83.9 22.7 81.5 23.3L79.5 23.9L71 31.3H14.2L5.7 23.9L3.7 23.3Q1.3 22.7 1.3 20.2V6.3Q1.3 1.3 6.3 1.3Z" fill="none" stroke="#fff" stroke-width="2.7" stroke-linejoin="round"/><rect x="14.8" y="14" width="57.2" height="5.4" rx="2.7" fill="#fff"/></symbol></defs></svg>
<div class="lbl" style="left:448.4px;top:96px;width:120px;font-size:17px;line-height:22px;color:#ececec;letter-spacing:0.1px">1080P60</div><svg class="abs" style="left:465.8px;top:137.9px" width="85.2" height="32.6"><use href="#hdmi"/></svg><div class="lbl" style="left:448.4px;top:194px;width:120px;font-size:17px;line-height:22px;color:#ececec;letter-spacing:0.08px">HDMI-1</div>
<div class="lbl" style="left:585.6px;top:96px;width:120px;font-size:17px;line-height:22px;color:#ececec;letter-spacing:0.1px">1080P60</div><svg class="abs" style="left:603.0px;top:137.9px" width="85.2" height="32.6"><use href="#hdmi"/></svg><div class="lbl" style="left:585.6px;top:194px;width:120px;font-size:17px;line-height:22px;color:#ececec;letter-spacing:0.21px">HDMI-2</div>
<div class="lbl" style="left:723.1px;top:96px;width:120px;font-size:17px;line-height:22px;color:#ececec;letter-spacing:0.1px">1080P60</div><svg class="abs" style="left:740.5px;top:137.9px" width="85.2" height="32.6"><use href="#hdmi"/></svg><div class="lbl" style="left:723.1px;top:194px;width:120px;font-size:17px;line-height:22px;color:#ececec;letter-spacing:0.21px">HDMI-3</div>
<div class="lbl" style="left:860.6px;top:96px;width:120px;font-size:17px;line-height:22px;color:#ececec;letter-spacing:0.1px">1080P60</div><svg class="abs" style="left:878.0px;top:137.9px" width="85.2" height="32.6"><use href="#hdmi"/></svg><div class="lbl" style="left:860.6px;top:194px;width:120px;font-size:17px;line-height:22px;color:#ececec;letter-spacing:0.21px">HDMI-4</div>
<div class="lbl" style="left:998.1px;top:96px;width:120px;font-size:17px;line-height:22px;color:#ececec;letter-spacing:0.1px">1080P60</div><svg class="abs" style="left:1015.5px;top:137.9px" width="85.2" height="32.6"><use href="#hdmi"/></svg><div class="lbl" style="left:998.1px;top:194px;width:120px;font-size:17px;line-height:22px;color:#ececec;letter-spacing:0.21px">HDMI-5</div>

</div>
<div class="card" id="c-pv" style="left:326px;top:832px;width:1568px;height:400px">
<div class="hd"><span class="t" style="letter-spacing:0.18px">Preview</span><span class="abs" style="left:106px;top:26px;font-size:15px;line-height:18px;color:#666;white-space:nowrap;letter-spacing:0.42px">Not a realtime video, picture only</span></div>
<!--PV-START--><div class="pc" style="left:18px;top:76px"><div class="scr" style="background:radial-gradient(ellipse 50px 38px at 78px 42px,rgba(38,70,146,.55),transparent 100%),radial-gradient(ellipse 56px 46px at 108px 74px,rgba(46,82,172,.75),transparent 100%),radial-gradient(ellipse 46px 42px at 138px 120px,rgba(36,64,140,.5),transparent 100%),linear-gradient(180deg,transparent 0,transparent 23px,rgba(44,104,112,.6) 26px,rgba(44,104,112,0) 29.5px),linear-gradient(180deg,#0c1626 0,#10232f 22px,#0f1a34 30px,#0d1530 60%,#0a1024 100%)"><span class="tt" style="left:19.5px;top:9.5px;font:bold 11.5px/14px 'Liberation Sans',sans-serif;color:#fff;letter-spacing:-.7px">Roku</span><span class="tt" style="right:19px;top:13px;font:5.4px/7px 'Liberation Sans',sans-serif;color:#d5d8dc">2:18 pm</span><div class="abs" style="left:19.8px;top:46.9px;width:124px;height:14.4px;background:#63b3cf"></div><span class="tt" style="left:26px;top:50.5px;font:bold 6.2px/8px 'Liberation Sans',sans-serif;color:#1a2230">Home</span><span class="tt" style="left:26px;top:63.7px;font:6.2px/8px 'Liberation Sans',sans-serif;color:#d3d8e2">Streaming Store</span><span class="tt" style="left:26px;top:77.5px;font:6.2px/8px 'Liberation Sans',sans-serif;color:#d3d8e2">Search</span><span class="tt" style="left:26px;top:91.4px;font:6.2px/8px 'Liberation Sans',sans-serif;color:#d3d8e2">Settings</span><span class="tt" style="left:161px;top:37px;font:4.4px/6px 'Liberation Sans',sans-serif;color:#c5c9d2">Apps</span><span class="tt" style="left:316px;top:37px;font:4.4px/6px 'Liberation Sans',sans-serif;color:#c5c9d2">27 items</span><svg class="abs" style="left:341.5px;top:49px" width="6" height="10" viewBox="0 0 6 10"><path d="M1 1l4 4-4 4" fill="none" stroke="#cfe3f5" stroke-width="1.2"/></svg><div class="tl" style="left:160.9px;top:46.1px;width:55.4px;height:42px;background:#0d1770;"><span class="tt" style="left:0;width:100%;top:1.9px;font:bold 27px/27px 'Liberation Sans',sans-serif;color:#fff;text-align:center;transform:scaleX(.8)">D</span><i class="sw"></i><span class="tt" style="left:0;width:100%;top:30.2px;font:bold 3.8px/5px 'Liberation Sans',sans-serif;color:#fff;text-align:center;letter-spacing:.15px">DIRECTV</span></div><div class="tl" style="left:221px;top:46.1px;width:55.4px;height:42px;background:#2dc04f;"><i class="abs" style="left:0;bottom:0;width:100%;height:12.2px;background:#f4f4f4"></i><span class="tt" style="left:0;width:100%;top:4.6px;font:italic bold 14px/15px 'Liberation Sans',sans-serif;color:#fff;text-align:center;letter-spacing:.7px">frndly</span><span class="tt" style="left:0;width:100%;top:21.8px;font:3.6px/5px 'Liberation Sans',sans-serif;color:#d8ffe0;text-align:center">Live TV</span><i class="abs" style="left:8%;bottom:3.8px;width:14%;height:3px;background:#222"></i><i class="abs" style="left:30%;bottom:4.2px;width:16%;height:2px;background:#777"></i><i class="abs" style="left:55%;bottom:2.5px;width:7%;height:5px;background:#e0a020"></i><i class="abs" style="left:72%;bottom:3.8px;width:18%;height:3px;background:#e0405a"></i></div><div class="tl" style="left:281px;top:46.1px;width:55.4px;height:42px;background:linear-gradient(180deg,#0c2c47,#15616d 60%,#2fad9e);"><svg class="abs" style="left:13px;top:8.5px" width="36" height="14" viewBox="0 0 36 14"><path d="M2 10C9 -1 28 -2 33 12" fill="none" stroke="#fff" stroke-width="1"/></svg><span class="tt" style="left:0;width:100%;top:17px;font:italic bold 13px/15px 'Liberation Serif',serif;color:#fff;text-align:center;letter-spacing:-.1px">Disney+</span></div><div class="tl" style="left:160.9px;top:92.6px;width:55.4px;height:42px;background:linear-gradient(135deg,#1f2b31,#10181c);"><span class="tt" style="left:0;width:100%;top:10px;font:bold 18px/22px 'Liberation Sans',sans-serif;color:#1ce783;text-align:center;letter-spacing:.6px">hulu</span></div><div class="tl" style="left:221px;top:92.6px;width:55.4px;height:42px;background:#0a0a0a;"><span class="tt" style="left:0;width:94%;top:13px;font:10.5px/14px 'Liberation Sans',sans-serif;color:#fff;text-align:center;letter-spacing:-.2px">peacock</span><i class="abs" style="right:9%;top:13px;width:1.2px;height:13px;background:linear-gradient(#f4c430,#e0483a,#8a4fd0,#2a9bd8,#3ab54a)"></i></div><div class="tl" style="left:281px;top:92.6px;width:55.4px;height:42px;background:#1263e6;"><svg class="abs" style="left:50%;top:14%;margin-left:-12px" width="24" height="20" viewBox="0 0 24 20"><path d="M2 19A10.5 10.5 0 1 1 22 19" fill="none" stroke="#fff" stroke-width="1.6" stroke-dasharray="1.6 1.3"/><path d="M4.5 19L11 7l3 4 2-2.5L21 19z" fill="#fff"/></svg><span class="tt" style="left:0;width:100%;top:62%;font:italic bold 8.2px/10px 'Liberation Serif',serif;color:#fff;text-align:center;letter-spacing:-.2px">Paramount+</span></div><div class="tl" style="left:160.9px;top:138.9px;width:55.4px;height:42px;background:#f3d45e;"><span class="tt" style="left:0;width:100%;top:9px;font:bold 14px/18px 'Liberation Sans',sans-serif;color:#c0211f;text-align:center;letter-spacing:-.2px">howdy</span><span class="tt" style="left:0;width:100%;top:31px;font:bold 3.8px/5px 'Liberation Sans',sans-serif;color:#c0211f;text-align:center">By Roku</span></div><div class="tl" style="left:221px;top:138.9px;width:55.4px;height:42px;background:#1c7ae8;"><span class="tt" style="left:0;width:100%;top:7px;font:bold 9.5px/10px 'Liberation Sans',sans-serif;color:#fff;text-align:center">prime</span><span class="tt" style="left:0;width:100%;top:16px;font:bold 9.5px/10px 'Liberation Sans',sans-serif;color:#fff;text-align:center">video</span><svg class="abs" style="left:16px;top:27px" width="24" height="7" viewBox="0 0 24 7"><path d="M1 1.5C7 6.5 17 6.5 22 2M22.5 1l-3 .3M22.5 1l-.5 3" fill="none" stroke="#fff" stroke-width="1.3"/></svg></div><div class="tl" style="left:281px;top:138.9px;width:55.4px;height:42px;background:linear-gradient(135deg,#1b2136,#0f1322);"><span class="tt" style="left:0;width:100%;top:6px;font:bold 15px/15px 'Liberation Sans',sans-serif;color:#fff;text-align:center;letter-spacing:-.6px">HBO</span><span class="tt" style="left:0;width:100%;top:18px;font:bold 15px/16px 'Liberation Sans',sans-serif;color:#fff;text-align:center;letter-spacing:.2px">max</span></div><div class="tl" style="left:160.9px;top:185.4px;width:55.4px;height:42px;background:#f2f2f2;"><span class="tt" style="left:0;width:100%;top:8px;font:bold 11px/14px 'Liberation Sans',sans-serif;color:#6a2bd9;text-align:center;letter-spacing:-.3px">Roku</span></div><div class="tl" style="left:221px;top:185.4px;width:55.4px;height:42px;background:#1b1d21;"><span class="tt" style="left:0;width:100%;top:7px;font:bold 13px/16px 'Liberation Sans',sans-serif;color:#fff;text-align:center">ple<b style="color:#e5a00d">x</b></span></div><div class="tl" style="left:281px;top:185.4px;width:55.4px;height:42px;background:#2b3eae;"><i class="abs" style="left:6px;top:12px;width:12px;height:12px;border-radius:50%;border:1.8px solid #fff"></i><span class="tt" style="left:20px;top:11px;font:bold 11px/14px 'Liberation Sans',sans-serif;color:#fff">PBS</span></div><span class="tt" style="left:116px;top:157.5px;font:3.5px/5px 'Liberation Sans',sans-serif;color:#ddd">Press</span><i class="abs" style="left:127px;top:157px;width:10px;height:6px;border-radius:1.5px;background:#eee"></i><div class="abs" style="left:19.8px;top:165.2px;width:124px;height:31.7px;border-radius:3px;overflow:hidden;background:linear-gradient(90deg,#c98aa6 0%,#d9a3b4 12%,#7f8f5a 30%,#3f5a2b 45%,#2e4a22 60%,#3d5424 80%,#2c3f1f 100%)"><i class="abs" style="left:36px;top:3px;width:18px;height:27px;background:#1c2a16;border-radius:50% 50% 20% 20%"></i><i class="abs" style="left:40px;top:12px;width:9px;height:9px;border-radius:50%;background:#5f9a3c"></i><i class="abs" style="left:14px;top:6px;width:12px;height:24px;background:#e6c8d6;border-radius:50% 50% 10% 10%;opacity:.8"></i><span class="tt" style="left:78px;top:4px;font:bold 8.5px/10px 'Liberation Serif',serif;color:#cf9a8e;letter-spacing:.3px">WICKED</span><span class="tt" style="left:84px;top:14px;font:bold 3.5px/5px 'Liberation Sans',sans-serif;color:#d8c27a">FOR GOOD</span><span class="tt" style="left:82px;top:20px;font:bold 3.4px/5px 'Liberation Sans',sans-serif;color:#f3e9b0">Stream now</span></div></div><div class="pn">Roku1</div></div>
<div class="pc" style="left:405px;top:76px"><div class="scr" style="background:radial-gradient(ellipse 26px 8px at 10px 186px,rgba(200,205,205,.55),transparent 100%),radial-gradient(ellipse 90px 14px at 60px 165px,rgba(150,160,160,.35),transparent 100%),radial-gradient(ellipse 120px 70px at 120px 40px,rgba(58,110,104,.8),rgba(36,78,74,.4) 60%,transparent 100%),radial-gradient(ellipse 90px 70px at 40px 110px,rgba(40,84,80,.7),transparent 100%),radial-gradient(ellipse 90px 50px at 300px 10px,rgba(4,8,10,.8),transparent 100%),linear-gradient(180deg,#12302f,#0e2426 50%,#0a1518)"><span class="tt" style="left:19.5px;top:9.5px;font:bold 11.5px/14px 'Liberation Sans',sans-serif;color:#fff;letter-spacing:-.7px">Roku</span><span class="tt" style="right:19px;top:13px;font:5.4px/7px 'Liberation Sans',sans-serif;color:#d5d8dc">2:18 pm</span><div class="abs" style="left:19.8px;top:46.9px;width:124px;height:14.4px;background:linear-gradient(180deg,#c4c4c4,#b4b4b4)"></div><span class="tt" style="left:26px;top:50.5px;font:bold 6.2px/8px 'Liberation Sans',sans-serif;color:#1a2230">Home</span><span class="tt" style="left:26px;top:63.7px;font:6.2px/8px 'Liberation Sans',sans-serif;color:#d3d8e2">Streaming Store</span><span class="tt" style="left:26px;top:77.5px;font:6.2px/8px 'Liberation Sans',sans-serif;color:#d3d8e2">Search</span><span class="tt" style="left:26px;top:91.4px;font:6.2px/8px 'Liberation Sans',sans-serif;color:#d3d8e2">Settings</span><span class="tt" style="left:161px;top:37px;font:4.4px/6px 'Liberation Sans',sans-serif;color:#c5c9d2">Apps</span><span class="tt" style="left:316px;top:37px;font:4.4px/6px 'Liberation Sans',sans-serif;color:#c5c9d2">27 items</span><svg class="abs" style="left:341.5px;top:49px" width="6" height="10" viewBox="0 0 6 10"><path d="M1 1l4 4-4 4" fill="none" stroke="#cfe3f5" stroke-width="1.2"/></svg><div class="tl" style="left:160.9px;top:46.1px;width:55.4px;height:42px;background:#0d1770;"><span class="tt" style="left:0;width:100%;top:1.9px;font:bold 27px/27px 'Liberation Sans',sans-serif;color:#fff;text-align:center;transform:scaleX(.8)">D</span><i class="sw"></i><span class="tt" style="left:0;width:100%;top:30.2px;font:bold 3.8px/5px 'Liberation Sans',sans-serif;color:#fff;text-align:center;letter-spacing:.15px">DIRECTV</span></div><div class="tl" style="left:221px;top:46.1px;width:55.4px;height:42px;background:#2dc04f;"><i class="abs" style="left:0;bottom:0;width:100%;height:12.2px;background:#f4f4f4"></i><span class="tt" style="left:0;width:100%;top:4.6px;font:italic bold 14px/15px 'Liberation Sans',sans-serif;color:#fff;text-align:center;letter-spacing:.7px">frndly</span><span class="tt" style="left:0;width:100%;top:21.8px;font:3.6px/5px 'Liberation Sans',sans-serif;color:#d8ffe0;text-align:center">Live TV</span><i class="abs" style="left:8%;bottom:3.8px;width:14%;height:3px;background:#222"></i><i class="abs" style="left:30%;bottom:4.2px;width:16%;height:2px;background:#777"></i><i class="abs" style="left:55%;bottom:2.5px;width:7%;height:5px;background:#e0a020"></i><i class="abs" style="left:72%;bottom:3.8px;width:18%;height:3px;background:#e0405a"></i></div><div class="tl" style="left:281px;top:46.1px;width:55.4px;height:42px;background:linear-gradient(180deg,#0c2c47,#15616d 60%,#2fad9e);"><svg class="abs" style="left:13px;top:8.5px" width="36" height="14" viewBox="0 0 36 14"><path d="M2 10C9 -1 28 -2 33 12" fill="none" stroke="#fff" stroke-width="1"/></svg><span class="tt" style="left:0;width:100%;top:17px;font:italic bold 13px/15px 'Liberation Serif',serif;color:#fff;text-align:center;letter-spacing:-.1px">Disney+</span></div><div class="tl" style="left:160.9px;top:92.6px;width:55.4px;height:42px;background:linear-gradient(135deg,#1f2b31,#10181c);"><span class="tt" style="left:0;width:100%;top:10px;font:bold 18px/22px 'Liberation Sans',sans-serif;color:#1ce783;text-align:center;letter-spacing:.6px">hulu</span></div><div class="tl" style="left:221px;top:92.6px;width:55.4px;height:42px;background:#0a0a0a;"><span class="tt" style="left:0;width:94%;top:13px;font:10.5px/14px 'Liberation Sans',sans-serif;color:#fff;text-align:center;letter-spacing:-.2px">peacock</span><i class="abs" style="right:9%;top:13px;width:1.2px;height:13px;background:linear-gradient(#f4c430,#e0483a,#8a4fd0,#2a9bd8,#3ab54a)"></i></div><div class="tl" style="left:281px;top:92.6px;width:55.4px;height:42px;background:#1263e6;"><svg class="abs" style="left:50%;top:14%;margin-left:-12px" width="24" height="20" viewBox="0 0 24 20"><path d="M2 19A10.5 10.5 0 1 1 22 19" fill="none" stroke="#fff" stroke-width="1.6" stroke-dasharray="1.6 1.3"/><path d="M4.5 19L11 7l3 4 2-2.5L21 19z" fill="#fff"/></svg><span class="tt" style="left:0;width:100%;top:62%;font:italic bold 8.2px/10px 'Liberation Serif',serif;color:#fff;text-align:center;letter-spacing:-.2px">Paramount+</span></div><div class="tl" style="left:160.9px;top:138.9px;width:55.4px;height:42px;background:#f3d45e;"><span class="tt" style="left:0;width:100%;top:9px;font:bold 14px/18px 'Liberation Sans',sans-serif;color:#c0211f;text-align:center;letter-spacing:-.2px">howdy</span><span class="tt" style="left:0;width:100%;top:31px;font:bold 3.8px/5px 'Liberation Sans',sans-serif;color:#c0211f;text-align:center">By Roku</span></div><div class="tl" style="left:221px;top:138.9px;width:55.4px;height:42px;background:#1c7ae8;"><span class="tt" style="left:0;width:100%;top:7px;font:bold 9.5px/10px 'Liberation Sans',sans-serif;color:#fff;text-align:center">prime</span><span class="tt" style="left:0;width:100%;top:16px;font:bold 9.5px/10px 'Liberation Sans',sans-serif;color:#fff;text-align:center">video</span><svg class="abs" style="left:16px;top:27px" width="24" height="7" viewBox="0 0 24 7"><path d="M1 1.5C7 6.5 17 6.5 22 2M22.5 1l-3 .3M22.5 1l-.5 3" fill="none" stroke="#fff" stroke-width="1.3"/></svg></div><div class="tl" style="left:281px;top:138.9px;width:55.4px;height:42px;background:linear-gradient(135deg,#1b2136,#0f1322);"><span class="tt" style="left:0;width:100%;top:6px;font:bold 15px/15px 'Liberation Sans',sans-serif;color:#fff;text-align:center;letter-spacing:-.6px">HBO</span><span class="tt" style="left:0;width:100%;top:18px;font:bold 15px/16px 'Liberation Sans',sans-serif;color:#fff;text-align:center;letter-spacing:.2px">max</span></div><div class="tl" style="left:160.9px;top:185.4px;width:55.4px;height:42px;background:#f2f2f2;"><span class="tt" style="left:0;width:100%;top:8px;font:bold 11px/14px 'Liberation Sans',sans-serif;color:#6a2bd9;text-align:center;letter-spacing:-.3px">Roku</span></div><div class="tl" style="left:221px;top:185.4px;width:55.4px;height:42px;background:#1b1d21;"><span class="tt" style="left:0;width:100%;top:7px;font:bold 13px/16px 'Liberation Sans',sans-serif;color:#fff;text-align:center">ple<b style="color:#e5a00d">x</b></span></div><div class="tl" style="left:281px;top:185.4px;width:55.4px;height:42px;background:#2b3eae;"><i class="abs" style="left:6px;top:12px;width:12px;height:12px;border-radius:50%;border:1.8px solid #fff"></i><span class="tt" style="left:20px;top:11px;font:bold 11px/14px 'Liberation Sans',sans-serif;color:#fff">PBS</span></div><span class="tt" style="left:116px;top:157.5px;font:3.5px/5px 'Liberation Sans',sans-serif;color:#ddd">Press</span><i class="abs" style="left:127px;top:157px;width:10px;height:6px;border-radius:1.5px;background:#eee"></i><div class="abs" style="left:19.8px;top:165.2px;width:124px;height:31.7px;border-radius:3px;overflow:hidden;background:linear-gradient(90deg,#5a1fb8 0%,#6a27c8 40%,#4a169a 75%,#3a1080 100%)"><i class="abs" style="left:0;bottom:-5px;width:70px;height:10px;border-radius:50%;background:#efe9fb"></i><i class="abs" style="left:40px;bottom:-6px;width:60px;height:9px;border-radius:50%;background:#e4d9fa"></i><i class="abs" style="left:6px;top:-2px;width:0;height:0;border-left:4px solid transparent;border-right:4px solid transparent;border-bottom:26px solid #19b9a0"></i><i class="abs" style="left:61px;top:17px;width:0;height:0;border-left:2.5px solid transparent;border-right:2.5px solid transparent;border-bottom:13px solid #19b9a0"></i><span class="tt" style="left:31px;top:4.5px;font:bold 4px/5px 'Liberation Serif',serif;color:#fff">Seasonal</span><span class="tt" style="left:23.5px;top:7.5px;font:bold 13px/14px 'Liberation Serif',serif;color:#fff;letter-spacing:-.1px">Savings</span><span class="tt" style="left:75px;top:2.5px;font:bold 3px/4px 'Liberation Sans',sans-serif;color:#fff">up to</span><span class="tt" style="left:74.5px;top:2px;font:bold 20px/20px 'Liberation Sans',sans-serif;color:#fff;letter-spacing:-.3px">90</span><span class="tt" style="left:98.5px;top:5.5px;font:bold 5px/6px 'Liberation Sans',sans-serif;color:#fff">%</span><span class="tt" style="left:98.5px;top:11px;font:bold 8px/8px 'Liberation Sans',sans-serif;color:#fff">off</span><span class="tt" style="left:75px;top:21px;font:bold 4.8px/6px 'Liberation Sans',sans-serif;color:#fff">subscriptions</span></div><i class="abs" style="left:38px;top:161.5px;width:40px;height:5.5px;border-radius:1.5px;background:#7a35d8"></i><span class="tt" style="left:41px;top:162px;font:3.2px/4.5px 'Liberation Sans',sans-serif;color:#fff">Last chance to save</span></div><div class="pn">Roku2</div></div>
<div class="pc" style="left:792px;top:76px"><div class="scr" style="background:linear-gradient(115deg,transparent 0 22%,rgba(70,130,58,.55) 30%,rgba(52,104,44,.5) 36%,transparent 40%),radial-gradient(ellipse 70px 120px at 70px 90px,rgba(56,112,50,.65),transparent 100%),radial-gradient(ellipse 60px 90px at 200px 30px,rgba(10,30,16,.75),transparent 100%),radial-gradient(ellipse 40px 100px at 350px 100px,rgba(50,100,46,.5),transparent 100%),linear-gradient(180deg,#1d4a26,#1a4423 50%,#143619)"><span class="tt" style="left:19.5px;top:9.5px;font:bold 11.5px/14px 'Liberation Sans',sans-serif;color:#fff;letter-spacing:-.7px">Roku</span><span class="tt" style="right:19px;top:13px;font:5.4px/7px 'Liberation Sans',sans-serif;color:#d5d8dc">2:19 pm</span><div class="abs" style="left:19.8px;top:46.9px;width:124px;height:14.4px;background:#e6e6e6"></div><span class="tt" style="left:26px;top:50.5px;font:bold 6.2px/8px 'Liberation Sans',sans-serif;color:#1a2230">Home</span><span class="tt" style="left:26px;top:63.7px;font:6.2px/8px 'Liberation Sans',sans-serif;color:#d3d8e2">Streaming Store</span><span class="tt" style="left:26px;top:77.5px;font:6.2px/8px 'Liberation Sans',sans-serif;color:#d3d8e2">Search</span><span class="tt" style="left:26px;top:91.4px;font:6.2px/8px 'Liberation Sans',sans-serif;color:#d3d8e2">Settings</span><span class="tt" style="left:161px;top:37px;font:4.4px/6px 'Liberation Sans',sans-serif;color:#c5c9d2">Apps</span><span class="tt" style="left:316px;top:37px;font:4.4px/6px 'Liberation Sans',sans-serif;color:#c5c9d2">27 items</span><svg class="abs" style="left:341.5px;top:49px" width="6" height="10" viewBox="0 0 6 10"><path d="M1 1l4 4-4 4" fill="none" stroke="#cfe3f5" stroke-width="1.2"/></svg><div class="tl" style="left:160.9px;top:46.1px;width:55.4px;height:42px;background:#0d1770;"><span class="tt" style="left:0;width:100%;top:1.9px;font:bold 27px/27px 'Liberation Sans',sans-serif;color:#fff;text-align:center;transform:scaleX(.8)">D</span><i class="sw"></i><span class="tt" style="left:0;width:100%;top:30.2px;font:bold 3.8px/5px 'Liberation Sans',sans-serif;color:#fff;text-align:center;letter-spacing:.15px">DIRECTV</span></div><div class="tl" style="left:221px;top:46.1px;width:55.4px;height:42px;background:#2dc04f;"><i class="abs" style="left:0;bottom:0;width:100%;height:12.2px;background:#f4f4f4"></i><span class="tt" style="left:0;width:100%;top:4.6px;font:italic bold 14px/15px 'Liberation Sans',sans-serif;color:#fff;text-align:center;letter-spacing:.7px">frndly</span><span class="tt" style="left:0;width:100%;top:21.8px;font:3.6px/5px 'Liberation Sans',sans-serif;color:#d8ffe0;text-align:center">Live TV</span><i class="abs" style="left:8%;bottom:3.8px;width:14%;height:3px;background:#222"></i><i class="abs" style="left:30%;bottom:4.2px;width:16%;height:2px;background:#777"></i><i class="abs" style="left:55%;bottom:2.5px;width:7%;height:5px;background:#e0a020"></i><i class="abs" style="left:72%;bottom:3.8px;width:18%;height:3px;background:#e0405a"></i></div><div class="tl" style="left:281px;top:46.1px;width:55.4px;height:42px;background:linear-gradient(180deg,#0c2c47,#15616d 60%,#2fad9e);"><svg class="abs" style="left:13px;top:8.5px" width="36" height="14" viewBox="0 0 36 14"><path d="M2 10C9 -1 28 -2 33 12" fill="none" stroke="#fff" stroke-width="1"/></svg><span class="tt" style="left:0;width:100%;top:17px;font:italic bold 13px/15px 'Liberation Serif',serif;color:#fff;text-align:center;letter-spacing:-.1px">Disney+</span></div><div class="tl" style="left:160.9px;top:92.6px;width:55.4px;height:42px;background:linear-gradient(135deg,#1f2b31,#10181c);"><span class="tt" style="left:0;width:100%;top:10px;font:bold 18px/22px 'Liberation Sans',sans-serif;color:#1ce783;text-align:center;letter-spacing:.6px">hulu</span></div><div class="tl" style="left:221px;top:92.6px;width:55.4px;height:42px;background:#0a0a0a;"><span class="tt" style="left:0;width:94%;top:13px;font:10.5px/14px 'Liberation Sans',sans-serif;color:#fff;text-align:center;letter-spacing:-.2px">peacock</span><i class="abs" style="right:9%;top:13px;width:1.2px;height:13px;background:linear-gradient(#f4c430,#e0483a,#8a4fd0,#2a9bd8,#3ab54a)"></i></div><div class="tl" style="left:281px;top:92.6px;width:55.4px;height:42px;background:#1263e6;"><svg class="abs" style="left:50%;top:14%;margin-left:-12px" width="24" height="20" viewBox="0 0 24 20"><path d="M2 19A10.5 10.5 0 1 1 22 19" fill="none" stroke="#fff" stroke-width="1.6" stroke-dasharray="1.6 1.3"/><path d="M4.5 19L11 7l3 4 2-2.5L21 19z" fill="#fff"/></svg><span class="tt" style="left:0;width:100%;top:62%;font:italic bold 8.2px/10px 'Liberation Serif',serif;color:#fff;text-align:center;letter-spacing:-.2px">Paramount+</span></div><div class="tl" style="left:160.9px;top:138.9px;width:55.4px;height:42px;background:#f3d45e;"><span class="tt" style="left:0;width:100%;top:9px;font:bold 14px/18px 'Liberation Sans',sans-serif;color:#c0211f;text-align:center;letter-spacing:-.2px">howdy</span><span class="tt" style="left:0;width:100%;top:31px;font:bold 3.8px/5px 'Liberation Sans',sans-serif;color:#c0211f;text-align:center">By Roku</span></div><div class="tl" style="left:221px;top:138.9px;width:55.4px;height:42px;background:#1c7ae8;"><span class="tt" style="left:0;width:100%;top:7px;font:bold 9.5px/10px 'Liberation Sans',sans-serif;color:#fff;text-align:center">prime</span><span class="tt" style="left:0;width:100%;top:16px;font:bold 9.5px/10px 'Liberation Sans',sans-serif;color:#fff;text-align:center">video</span><svg class="abs" style="left:16px;top:27px" width="24" height="7" viewBox="0 0 24 7"><path d="M1 1.5C7 6.5 17 6.5 22 2M22.5 1l-3 .3M22.5 1l-.5 3" fill="none" stroke="#fff" stroke-width="1.3"/></svg></div><div class="tl" style="left:281px;top:138.9px;width:55.4px;height:42px;background:linear-gradient(135deg,#1b2136,#0f1322);"><span class="tt" style="left:0;width:100%;top:6px;font:bold 15px/15px 'Liberation Sans',sans-serif;color:#fff;text-align:center;letter-spacing:-.6px">HBO</span><span class="tt" style="left:0;width:100%;top:18px;font:bold 15px/16px 'Liberation Sans',sans-serif;color:#fff;text-align:center;letter-spacing:.2px">max</span></div><div class="tl" style="left:160.9px;top:185.4px;width:55.4px;height:42px;background:#f2f2f2;"><span class="tt" style="left:0;width:100%;top:8px;font:bold 11px/14px 'Liberation Sans',sans-serif;color:#6a2bd9;text-align:center;letter-spacing:-.3px">Roku</span></div><div class="tl" style="left:221px;top:185.4px;width:55.4px;height:42px;background:#1b1d21;"><span class="tt" style="left:0;width:100%;top:7px;font:bold 13px/16px 'Liberation Sans',sans-serif;color:#fff;text-align:center">ple<b style="color:#e5a00d">x</b></span></div><div class="tl" style="left:281px;top:185.4px;width:55.4px;height:42px;background:#2b3eae;"><i class="abs" style="left:6px;top:12px;width:12px;height:12px;border-radius:50%;border:1.8px solid #fff"></i><span class="tt" style="left:20px;top:11px;font:bold 11px/14px 'Liberation Sans',sans-serif;color:#fff">PBS</span></div><span class="tt" style="left:116px;top:157.5px;font:3.5px/5px 'Liberation Sans',sans-serif;color:#ddd">Press</span><i class="abs" style="left:127px;top:157px;width:10px;height:6px;border-radius:1.5px;background:#eee"></i><div class="abs" style="left:19.8px;top:165.2px;width:124px;height:31.7px;border-radius:3px;overflow:hidden;background:linear-gradient(90deg,#5a1fb8 0%,#6a27c8 40%,#4a169a 75%,#3a1080 100%)"><i class="abs" style="left:0;bottom:-5px;width:70px;height:10px;border-radius:50%;background:#efe9fb"></i><i class="abs" style="left:40px;bottom:-6px;width:60px;height:9px;border-radius:50%;background:#e4d9fa"></i><i class="abs" style="left:6px;top:-2px;width:0;height:0;border-left:4px solid transparent;border-right:4px solid transparent;border-bottom:26px solid #19b9a0"></i><i class="abs" style="left:61px;top:17px;width:0;height:0;border-left:2.5px solid transparent;border-right:2.5px solid transparent;border-bottom:13px solid #19b9a0"></i><span class="tt" style="left:31px;top:4.5px;font:bold 4px/5px 'Liberation Serif',serif;color:#fff">Seasonal</span><span class="tt" style="left:23.5px;top:7.5px;font:bold 13px/14px 'Liberation Serif',serif;color:#fff;letter-spacing:-.1px">Savings</span><span class="tt" style="left:75px;top:2.5px;font:bold 3px/4px 'Liberation Sans',sans-serif;color:#fff">up to</span><span class="tt" style="left:74.5px;top:2px;font:bold 20px/20px 'Liberation Sans',sans-serif;color:#fff;letter-spacing:-.3px">90</span><span class="tt" style="left:98.5px;top:5.5px;font:bold 5px/6px 'Liberation Sans',sans-serif;color:#fff">%</span><span class="tt" style="left:98.5px;top:11px;font:bold 8px/8px 'Liberation Sans',sans-serif;color:#fff">off</span><span class="tt" style="left:75px;top:21px;font:bold 4.8px/6px 'Liberation Sans',sans-serif;color:#fff">subscriptions</span></div><i class="abs" style="left:38px;top:161.5px;width:40px;height:5.5px;border-radius:1.5px;background:#7a35d8"></i><span class="tt" style="left:41px;top:162px;font:3.2px/4.5px 'Liberation Sans',sans-serif;color:#fff">Last chance to save</span></div><div class="pn">Roku3</div></div>
<div class="pc" style="left:1179px;top:76px"><div class="scr" style="background:linear-gradient(180deg,rgba(22,22,22,0) 58%,rgba(22,22,22,.8) 80%,#171717 100%),linear-gradient(90deg,#1b1b1b 0,#1e1e1e 20%,rgba(30,30,30,.7) 38%,rgba(30,30,30,.25) 52%,rgba(30,30,30,0) 62%),radial-gradient(ellipse 33px 22px at 256px 36px,#16130f 0,#16130f 82%,transparent 100%),radial-gradient(ellipse 10px 20px at 230px 56px,#16130f 0,#16130f 70%,transparent 100%),radial-gradient(ellipse 8px 16px at 284px 52px,#16130f 0,#16130f 70%,transparent 100%),radial-gradient(ellipse 12px 30px at 236px 74px,rgba(70,50,42,.55),transparent 100%),radial-gradient(ellipse 27px 37px at 256px 72px,#b48e7a 0,#a88370 55%,#8c6a5a 80%,#5e463c 92%,transparent 100%),radial-gradient(ellipse 16px 12px at 246px 112px,#d2d0cc 0,#a9a7a4 60%,transparent 100%),radial-gradient(ellipse 85px 62px at 275px 172px,#1b202b 0,#1b202b 78%,transparent 100%),linear-gradient(79deg,transparent 0 86.5%,#72665b 87.5%,#62574d 92%,#4c423a 95%,#2e2a27 97.5%,#242322 100%),radial-gradient(ellipse 42px 34px at 318px 88px,#c6cac6,rgba(170,176,170,.75) 60%,transparent 100%),radial-gradient(ellipse 60px 40px at 170px 75px,#56704f,rgba(86,108,80,.5) 70%,transparent 100%),linear-gradient(180deg,#3b3d3a 0,#4f534d 14%,#6e756b 40%,#7b8177 55%,#55584f 75%,#2b2c2b 100%)"><i class="abs" style="left:22px;top:14px;width:14px;height:14px;border-radius:50%;background:radial-gradient(circle at 40% 40%,#d8d4c0,#7d7a68 60%,#4a4a40)"></i><i class="abs" style="left:43.5px;top:14.5px;width:28.5px;height:13px;border-radius:6.5px;background:#c8d8e8"></i><span class="tt" style="left:43.5px;width:28.5px;top:17.5px;font:bold 5px/7px 'Liberation Sans',sans-serif;color:#1c2a3a;text-align:center">Home</span><i class="abs" style="left:79px;top:14.5px;width:31px;height:13px;border-radius:6.5px;background:#3a3a3a"></i><i class="abs" style="left:84.5px;top:19px;width:5px;height:4px;border:.8px solid #ccc"></i><i class="abs" style="left:100px;top:18.5px;width:4px;height:4px;border:.8px solid #ccc;border-radius:50%"></i><span class="tt" style="right:21px;top:17.5px;font:5.6px/7px 'Liberation Sans',sans-serif;color:#cfcfcf">2:19 | Google TV</span><span class="tt" style="left:23px;top:56px;font:italic 3.6px/5px 'Liberation Sans',sans-serif;color:#ccc">disney+</span><span class="tt" style="left:22.5px;top:68px;font:13.5px/16px 'Liberation Sans',sans-serif;color:#e2e2e2;letter-spacing:-.1px">Made in Korea</span><span class="tt" style="left:22.5px;top:90px;font:bold 5.2px/7px 'Liberation Sans',sans-serif;color:#c9c9c9;letter-spacing:.35px">New crime-thriller series • Two-episode premiere</span><span class="tt" style="left:22.5px;top:117px;font:3.4px/5px 'Liberation Sans',sans-serif;color:#bbb">Your apps</span><div class="tl" style="left:23.4px;top:125.7px;width:57px;height:32.6px;background:#0d1770;border-radius:3px"><span class="tt" style="left:0;width:100%;top:1.5px;font:bold 21px/21px 'Liberation Sans',sans-serif;color:#fff;text-align:center;transform:scaleX(.8)">D</span><i class="sw"></i><span class="tt" style="left:0;width:100%;top:23.5px;font:bold 3.8px/5px 'Liberation Sans',sans-serif;color:#fff;text-align:center;letter-spacing:.15px">DIRECTV</span></div><div class="tl" style="left:89px;top:125.7px;width:57px;height:32.6px;background:#0a0a0a;border-radius:3px"><span class="tt" style="left:0;width:94%;top:9px;font:10.5px/14px 'Liberation Sans',sans-serif;color:#fff;text-align:center;letter-spacing:-.2px">peacock</span><i class="abs" style="right:9%;top:9px;width:1.2px;height:13px;background:linear-gradient(#f4c430,#e0483a,#8a4fd0,#2a9bd8,#3ab54a)"></i></div><div class="tl" style="left:154.5px;top:125.7px;width:57px;height:32.6px;background:#2dc04f;border-radius:3px"><i class="abs" style="left:0;bottom:0;width:100%;height:9.5px;background:#f4f4f4"></i><span class="tt" style="left:0;width:100%;top:3.6px;font:italic bold 12px/13px 'Liberation Sans',sans-serif;color:#fff;text-align:center;letter-spacing:.7px">frndly</span><span class="tt" style="left:0;width:100%;top:17px;font:3.6px/5px 'Liberation Sans',sans-serif;color:#d8ffe0;text-align:center">Live TV</span><i class="abs" style="left:8%;bottom:2.9px;width:14%;height:3px;background:#222"></i><i class="abs" style="left:30%;bottom:3.3px;width:16%;height:2px;background:#777"></i><i class="abs" style="left:55%;bottom:2px;width:7%;height:5px;background:#e0a020"></i><i class="abs" style="left:72%;bottom:2.9px;width:18%;height:3px;background:#e0405a"></i></div><div class="tl" style="left:220.3px;top:125.7px;width:57px;height:32.6px;background:#1263e6;border-radius:3px"><svg class="abs" style="left:50%;top:5px;margin-left:-9.5px" width="19" height="15" viewBox="0 0 24 20"><path d="M2 19A10.5 10.5 0 1 1 22 19" fill="none" stroke="#fff" stroke-width="1.8" stroke-dasharray="1.6 1.3"/><path d="M4.5 19L11 7l3 4 2-2.5L21 19z" fill="#fff"/></svg><span class="tt" style="left:0;width:100%;top:19.5px;font:italic bold 6px/8px 'Liberation Serif',serif;color:#dfeaff;text-align:center;letter-spacing:-.2px">Paramount+</span></div><i class="abs" style="left:85px;top:188px;width:5px;height:5px;border:.7px solid #bbb;border-radius:50%"></i><span class="tt" style="left:93px;top:187.5px;font:4.6px/6px 'Liberation Sans',sans-serif;color:#bdbdbd;letter-spacing:.12px">Apps only mode is enabled. You can adjust this in Settings › Accounts &amp; Profiles</span><i class="abs" style="left:315px;top:100px;width:3px;height:3px;border-radius:50%;background:#fff"></i></div><div class="pn">LinkPi1</div></div>
<!--PV-END-->
</div>
<div class="abs" style="right:30px;top:1179px;font-size:15px;line-height:20px;color:rgba(95,95,100,.42);white-space:nowrap;letter-spacing:0.21px">2018-2024 © LinkPi Studio</div>
</body>
</html>
